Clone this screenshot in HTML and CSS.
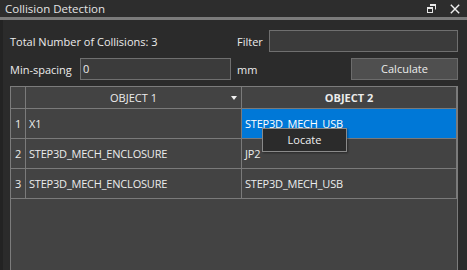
FILE: index.html
```html
<!DOCTYPE html>
<html>
<head>
<meta charset="utf-8">
<link rel="stylesheet" href="styles.css">
</head>
<body>
<div class="win">
  <div class="titlebar">
    <span class="title">Collision Detection</span>
    <div class="tb-icons">
      <svg class="ic-restore" width="9" height="9" viewBox="0 0 9 9">
        <path d="M3 0.5H8.5V5.5" fill="none" stroke="#e8e8e8" stroke-width="1"/>
        <rect x="3" y="0" width="6" height="2" fill="#e8e8e8"/>
        <rect x="0.5" y="3.5" width="5" height="5" fill="none" stroke="#e8e8e8" stroke-width="1"/>
        <rect x="0" y="3" width="6" height="2" fill="#e8e8e8"/>
      </svg>
      <svg class="ic-close" width="10" height="10" viewBox="0 0 10 10">
        <path d="M0.8 0.8L9.2 9.2M9.2 0.8L0.8 9.2" stroke="#f0f0f0" stroke-width="1.4"/>
      </svg>
    </div>
  </div>
  <div class="sep"></div>
  <div class="body">
    <div class="row r1">
      <span class="lbl total">Total Number of Collisions: 3</span>
      <span class="lbl filter">Filter</span>
      <div class="input filter-in"></div>
    </div>
    <div class="row r2">
      <span class="lbl ms">Min-spacing</span>
      <div class="input ms-in">0</div>
      <span class="lbl mm">mm</span>
      <div class="btn">Calculate</div>
    </div>
    <div class="table">
      <div class="grid head">
        <div class="c num"></div>
        <div class="c h">OBJECT 1<span class="tri"></span></div>
        <div class="c h bold">OBJECT 2</div>
      </div>
      <div class="grid row-d">
        <div class="c num">1</div>
        <div class="c">X1</div>
        <div class="c sel">STEP3D_MECH_USB</div>
      </div>
      <div class="grid row-d">
        <div class="c num">2</div>
        <div class="c">STEP3D_MECH_ENCLOSURE</div>
        <div class="c">JP2</div>
      </div>
      <div class="grid row-d">
        <div class="c num">3</div>
        <div class="c">STEP3D_MECH_ENCLOSURE</div>
        <div class="c">STEP3D_MECH_USB</div>
      </div>
    </div>
  </div>
  <div class="menu">Locate</div>
</div>
</body>
</html>
```
FILE: styles.css
```css
* { box-sizing: border-box; }
html, body { margin: 0; padding: 0; background: #2b2b2b; }
body { font-family: "Open Sans", "Noto Sans", sans-serif; font-size: 11px; color: #ececec; }

.win {
  position: relative;
  width: 467px;
  height: 270px;
  overflow: hidden;
  background: #2b2b2b;
  display: flex;
  flex-direction: column;
}

.titlebar {
  height: 17px;
  background: #2d2d2d;
  display: flex;
  align-items: center;
  padding-left: 5px;
  padding-right: 7px;
}
.title { font-size: 11.5px; color: #e4e4e4; flex: 1; line-height: 17px; }
.tb-icons { display: flex; align-items: center; gap: 14px; }
.ic-restore, .ic-close { display: block; }

.sep { height: 3px; background: #7b7b7b; }

.body {
  flex: 1;
  border-left: 3px solid #232323;
  padding: 10px 9px 0 7px;
  display: flex;
  flex-direction: column;
}

.row { display: flex; align-items: center; height: 22px; }
.r1 { margin-bottom: 6px; }
.r2 { margin-bottom: 6px; }
.lbl { white-space: nowrap; }
.total { width: 227px; }
.filter { width: 32px; }
.ms { width: 70px; }
.mm { width: 114px; margin-left: 6px; }

.input {
  height: 22px;
  border: 1px solid #6f6f6f;
  background: #3b3b3b;
  padding-left: 2px;
  line-height: 20px;
}
.filter-in { flex: 1; }
.ms-in { width: 151px; }

.btn {
  flex: 1;
  height: 22px;
  border: 1px solid #6c6c6c;
  background: #4f4f4f;
  text-align: center;
  line-height: 20px;
}

.table {
  flex: 1;
  border: 1px solid #7c7c7c;
  border-bottom: none;
  background: #434343;
}
.grid {
  display: grid;
  grid-template-columns: 15px 216px 215px;
}
.c {
  border-right: 1px solid #7a7a7a;
  border-bottom: 1px solid #7a7a7a;
  padding-left: 3px;
  white-space: nowrap;
  overflow: hidden;
  display: flex;
  align-items: center;
  letter-spacing: -0.2px;
}
.head .c { height: 22px; letter-spacing: 0; }
.row-d .c { height: 30px; }
.num { padding-left: 0; justify-content: center; }
.h { justify-content: center; position: relative; padding-left: 0; }
.bold { font-weight: bold; }
.tri {
  position: absolute;
  right: 4px;
  top: 9px;
  width: 0;
  height: 0;
  border-left: 3px solid transparent;
  border-right: 3px solid transparent;
  border-top: 4px solid #f0f0f0;
}
.sel { background: #0078d7; color: #ffffff; }

.menu {
  position: absolute;
  left: 262px;
  top: 128px;
  width: 85px;
  height: 24px;
  background: #2b2b2b;
  border: 1px solid #8a8a8a;
  text-align: center;
  line-height: 22px;
  color: #f0f0f0;
  box-shadow: 1px 1px 2px rgba(0,0,0,0.4);
}
```
